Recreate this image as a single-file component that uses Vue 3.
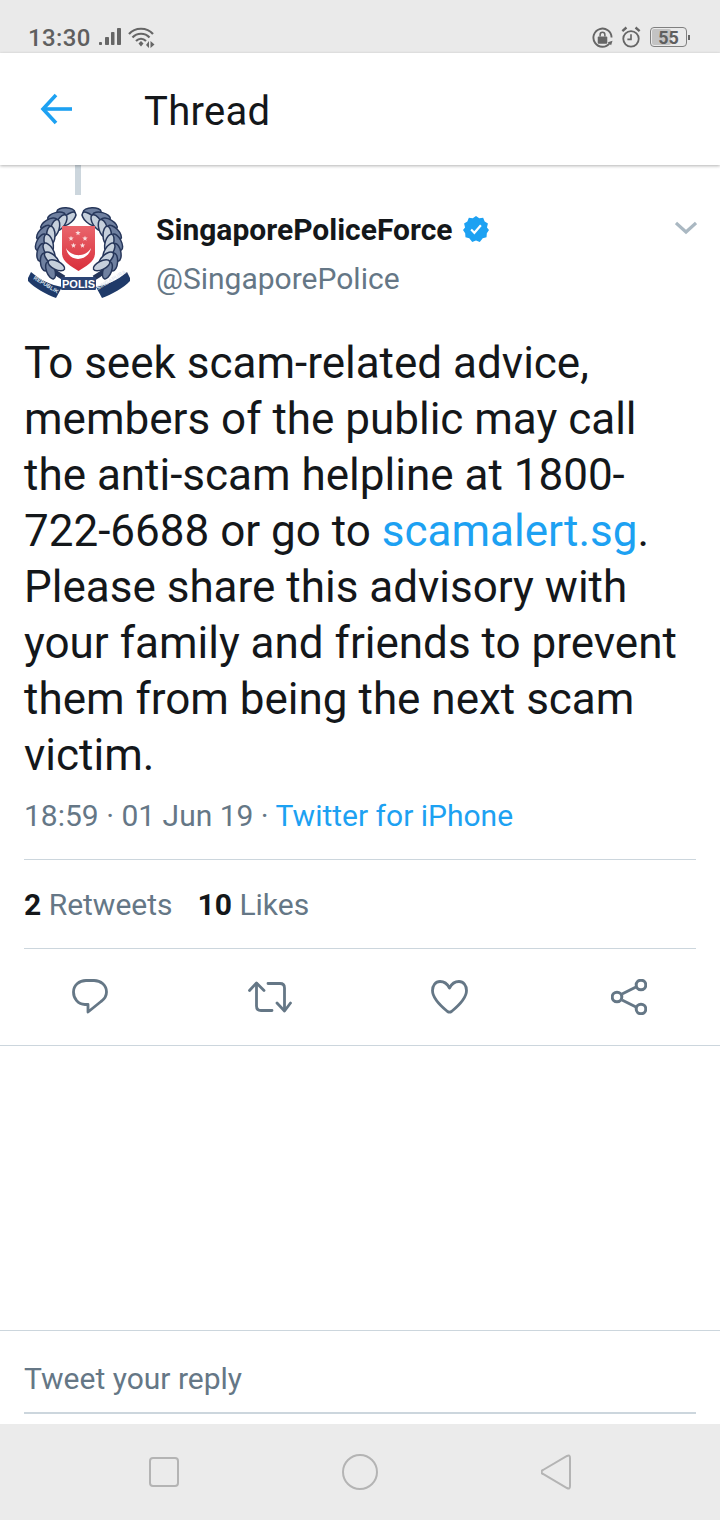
<template>
  <div class="phone">
    <div class="status">
      <div class="status-left">
        <span class="time">13:30</span>
        <svg class="signal" width="22" height="18" viewBox="0 0 22 18"><rect x="0" y="14" width="3" height="3" rx=".8"/><rect x="6" y="9" width="4" height="8" rx=".8"/><rect x="12" y="4" width="3.5" height="13" rx=".8"/><rect x="18" y="0" width="4" height="17" rx=".8"/></svg>
        <svg class="wifi" width="27" height="21" viewBox="0 0 27 21" fill="none" stroke="#666" stroke-width="2.200"><path d="M1 7C7 0 19 0 25 7"/><path d="M4.500 10.500C9 5.500 17 5.500 21.500 10.500"/><path d="M8 14C11 11 15 11 18 14"/><path d="M10.500 16.500l2.500-2.500 2.500 2.500-2.500 3z" fill="#666" stroke="none"/><path d="M18 18l3-4v7zM22.500 14l4 3.500-4 3.500z" fill="#666" stroke="none"/></svg>
      </div>
      <div class="status-right">
        <svg width="21" height="21" viewBox="0 0 22 22" fill="none" stroke="#666" stroke-width="2"><path d="M18.500 17A9.500 9.500 0 1 1 20.500 11"/><path d="M21.500 14.500l-5 1.500 3.500 3z" fill="#666" stroke="none"/><rect x="6" y="10" width="10" height="7.500" rx="1" fill="#666" stroke="none"/><path d="M8.500 10V8a2.500 2.500 0 0 1 5 0v2" stroke-width="1.600"/></svg>
        <svg width="20" height="23" viewBox="0 0 22 25" fill="none" stroke="#666" stroke-width="2"><circle cx="11" cy="14" r="8.500"/><path d="M11 9v5.500H7" stroke-width="1.800"/><path d="M1.500 5.500L6 1.500M20.500 5.500L16 1.500" stroke-width="2.600"/></svg>
        <div class="battery-group">
          <div class="battery"><div class="battery-fill"></div><span>55</span></div>
          <div class="battery-tip"></div>
        </div>
      </div>
    </div>

    <header class="bar">
      <svg class="back" width="32" height="32" viewBox="0 0 32 32" fill="none" stroke="#1da1f2" stroke-width="3.600"><path d="M32 16H4"/><path d="M16 2L3 16l13 14"/></svg>
      <h1>Thread</h1>
    </header>

    <main class="content">
      <div class="stem"></div>
      <div class="author">
        <svg class="crest" width="102" height="95" viewBox="28 205 102 95">
          <defs>
            <linearGradient id="shield" x1="0" y1="0" x2="0" y2="1">
              <stop offset="0" stop-color="#e9656c"/>
              <stop offset="1" stop-color="#d92f3b"/>
            </linearGradient>
          </defs>
          <g v-for="side in sides" :key="side" :transform="side">
            <path d="M66 213C46 219 36 236 41 254c3 10 11 17 23 24" fill="none" stroke="#26365a" stroke-width="5"/>
            <ellipse v-for="(leaf, i) in leaves" :key="i" :cx="leaf.x" :cy="leaf.y" rx="9" ry="4.200" :transform="leaf.t" :fill="leaf.fill" stroke="#26365a" stroke-width="1.500"/>
            <path d="M31 272c9 8 20 13 31 15l-6 11c-11-4-22-10-29-18z" fill="#1f3a69"/>
          </g>
          <text class="tiny" transform="translate(33 279) rotate(31)">REPUBLIK</text>
          <text class="tiny" transform="translate(98 290) rotate(-31)">SINGAPURA</text>
          <path d="M62 226h33v27c0 9-9 13-16.500 18C71 266 62 262 62 253z" fill="url(#shield)"/>
          <path d="M66 248c5 9 19 10 25 0-2 13-22 16-25 0z" fill="#fff"/>
          <polygon v-for="(s, i) in stars" :key="i" :points="s" fill="#f9dcdc"/>
          <rect x="61" y="277" width="35" height="13" rx="1" fill="#2c4474"/>
          <text x="78.500" y="287.500" text-anchor="middle" class="polis">POLIS</text>
        </svg>
        <div class="names">
          <div class="name-row">
            <span class="name">SingaporePoliceForce</span>
            <svg class="verified" width="26" height="26" viewBox="0 0 24 24"><path d="M12 0l3 2 3.600-.3 1.400 3.300 3 2-.9 3.500L24 13l-2 3-.3 3.600-3.500.9L15.500 24 12 22.600 8.500 24l-2.700-3.500-3.500-.9L2 16l-2-3 1.900-2.500L1 7l3-2L5.400 1.700 9 2z" fill="#1da1f2"/><path d="M7.500 12.500l3 3 6-7" fill="none" stroke="#fff" stroke-width="2"/></svg>
          </div>
          <div class="handle">@SingaporePolice</div>
        </div>
        <svg class="caret" width="22" height="14" viewBox="0 0 22 14" fill="none" stroke="#aab8c2" stroke-width="3.200"><path d="M1 2l10 9 10-9"/></svg>
      </div>

      <p class="tweet">To seek scam-related advice, members of the public may call the anti-scam helpline at 1800-722-6688 or go to <span class="link">scamalert.sg</span>. Please share this advisory with your family and friends to prevent them from being the next scam victim.</p>

      <div class="meta">18:59 · 01 Jun 19 · <span class="link">Twitter for iPhone</span></div>

      <div class="stats">
        <span><b>2</b> Retweets</span>
        <span><b>10</b> Likes</span>
      </div>

      <div class="actions">
        <svg width="36" height="36" viewBox="0 0 36 36" fill="none" stroke="#657786" stroke-width="2.800" stroke-linejoin="round"><path d="M14 1.500h8c7 0 12.500 5 12.500 11.500 0 4-2 7-5.500 9.500L16 33v-7.500h-3C6 25.500 1.500 19.500 1.500 13 1.500 6.500 7 1.500 14 1.500z"/></svg>
        <svg width="44" height="32" viewBox="0 0 44 32" fill="none" stroke="#657786" stroke-width="2.800" stroke-linecap="round" stroke-linejoin="round"><path d="M1.500 9.500L8.500 2l7.500 7.500"/><path d="M8.500 3v22c0 3 1.500 4.500 4.500 4.500h11"/><path d="M20 2.500h12c3 0 4.500 1.500 4.500 4.500v22"/><path d="M29 22l7.500 8 6-8"/></svg>
        <svg class="nudge" width="37" height="34" viewBox="0 0 37 34" fill="none" stroke="#657786" stroke-width="2.800" stroke-linejoin="round"><path d="M18.500 8C16 3 12 1.500 9 1.500 4.500 1.500 1.500 5.500 1.500 10.500 1.500 18 11 27 16.500 31.500c1.500 1 2.500 1 4 0C26 27 35.500 18 35.500 10.500 35.500 5.500 32.500 1.500 28 1.500 25 1.500 21 3 18.500 8z"/></svg>
        <svg class="nudge" width="36" height="36" viewBox="0 0 36 36" fill="none" stroke="#657786" stroke-width="3"><circle cx="6" cy="18" r="4.800"/><circle cx="30" cy="6" r="4.800"/><circle cx="30" cy="30" r="4.800"/><path d="M11 15l14-7M11 21l14 7"/></svg>
      </div>
    </main>

    <div class="spacer"></div>

    <footer class="reply">
      <div class="reply-text">Tweet your reply</div>
    </footer>

    <nav class="nav">
      <svg width="30" height="30" viewBox="0 0 30 30" fill="none" stroke="#b4b4b4" stroke-width="2"><rect x="1" y="1" width="28" height="28" rx="3"/></svg>
      <svg width="36" height="36" viewBox="0 0 36 36" fill="none" stroke="#b4b4b4" stroke-width="2"><circle cx="18" cy="18" r="17"/></svg>
      <svg width="30" height="36" viewBox="0 0 30 36" fill="none" stroke="#b4b4b4" stroke-width="2"><path d="M2 16L26 2c2-1 3-.5 3 2v28c0 2.500-1 3-3 2L2 20c-2-1-2-3 0-4z"/></svg>
    </nav>
  </div>
</template>

<script setup>
const sides = ['translate(0 0)', 'translate(158 0) scale(-1 1)']

const leaves = []
for (let i = 0; i < 8; i++) {
  const deg = 250 - i * 16
  const a = (deg * Math.PI) / 180
  for (const [r, tilt] of [[0.98, 22], [0.78, -22]]) {
    const x = 79 + 39 * r * Math.cos(a)
    const y = 246 + 37 * r * Math.sin(a)
    leaves.push({
      x: x.toFixed(1),
      y: y.toFixed(1),
      t: `rotate(${(deg + 90 + tilt).toFixed(0)} ${x.toFixed(1)} ${y.toFixed(1)})`,
      fill: r > 0.9 ? '#6f80a0' : '#c6d0dc',
    })
  }
}

function star(cx, cy, r) {
  const pts = []
  for (let i = 0; i < 10; i++) {
    const rad = i % 2 ? r * 0.42 : r
    const a = (-90 + i * 36) * (Math.PI / 180)
    pts.push(`${(cx + rad * Math.cos(a)).toFixed(1)},${(cy + rad * Math.sin(a)).toFixed(1)}`)
  }
  return pts.join(' ')
}
const stars = [
  star(78, 233, 2.8),
  star(71, 238.500, 2.8),
  star(85, 238.500, 2.8),
  star(73.500, 245.500, 2.8),
  star(82.500, 245.500, 2.8),
]
</script>

<style>
html, body { margin: 0; background: #fff; }
</style>

<style scoped>
.phone {
  width: 720px;
  height: 1520px;
  display: flex;
  flex-direction: column;
  background: #fff;
  font-family: Roboto, "Liberation Sans", sans-serif;
  color: #14171a;
  overflow: hidden;
}
.status {
  height: 53px;
  flex: none;
  background: #eaeaea;
  display: flex;
  justify-content: space-between;
  align-items: flex-end;
  padding: 0 30px 0 28px;
  box-sizing: border-box;
}
.status-left { display: flex; align-items: center; gap: 7px; height: 30px; margin-bottom: 1px; }
.time { font-size: 24px; font-weight: 500; color: #5f5f5f; line-height: 30px; letter-spacing: .4px; padding-top: 2px; margin-right: 1px; }
.signal { fill: #666; }
.status-right { display: flex; align-items: center; gap: 8px; height: 30px; margin-bottom: 1px; }
.battery-group { display: flex; align-items: center; gap: 1px; margin-left: 1px; }
.battery {
  position: relative;
  width: 37px;
  height: 20px;
  box-sizing: border-box;
  border: 1.500px solid #808080;
  border-radius: 4px;
  display: flex;
  align-items: center;
  justify-content: center;
  font-size: 18px;
  font-weight: 700;
  color: #5f5f5f;
}
.battery span { position: relative; }
.battery-fill { position: absolute; left: 1px; top: 1px; bottom: 1px; width: 19px; background: #c3c3c3; border-radius: 2px; }
.battery-tip { width: 2px; height: 5px; background: #666; }
.bar {
  height: 112px;
  flex: none;
  display: flex;
  align-items: center;
  box-shadow: 0 1px 3px rgba(0,0,0,.3);
  position: relative;
  z-index: 1;
  padding-left: 40px;
  box-sizing: border-box;
}
.back { flex: none; }
.bar h1 { margin: 5px 0 0 72px; font-size: 40px; font-weight: 400; line-height: 50px; color: #14171a; letter-spacing: .3px; }
.content { flex: none; padding: 0 24px; border-bottom: 1px solid #ccd6dd; box-sizing: border-box; }
.stem { width: 6px; height: 30px; background: #ccd6dd; margin-left: 51px; }
.author { display: flex; align-items: flex-start; height: 110px; margin-top: 12px; }
.crest { flex: none; margin: -2px 0 0 4px; }
.polis { font: 700 11px "Liberation Sans", sans-serif; fill: #fff; }
.tiny { font: 700 5.500px "Liberation Sans", sans-serif; fill: #dfe6f0; }
.names { margin-left: 26px; flex: 1; }
.name-row { display: flex; align-items: center; gap: 10px; height: 44px; }
.name { font-size: 30px; font-weight: 700; color: #14171a; }
.handle { font-size: 30px; color: #657786; line-height: 50px; margin-top: 3px; }
.caret { flex: none; margin-top: 14px; margin-right: -1px; }
.tweet { margin: 18px 0 0; font-size: 44px; line-height: 56px; color: #14171a; }
.link { color: #1da1f2; }
.meta { font-size: 30px; line-height: 40px; color: #657786; margin-top: 13px; padding-bottom: 23px; border-bottom: 1px solid #ccd6dd; }
.stats { display: flex; gap: 25px; height: 88px; align-items: center; border-bottom: 1px solid #ccd6dd; font-size: 30px; color: #657786; }
.stats b { color: #14171a; font-weight: 700; }
.actions { display: grid; grid-template-columns: repeat(4, 180px); justify-items: center; align-items: center; height: 96px; margin: 0 -24px; }
.nudge { margin-right: 2px; }
.spacer { flex: 1; }
.reply { flex: none; height: 94px; border-top: 1px solid #ccd6dd; padding: 0 24px; box-sizing: border-box; }
.reply-text { height: 81px; line-height: 96px; font-size: 30px; color: #657786; border-bottom: 2px solid #ccd6dd; }
.nav { flex: none; height: 96px; background: #ebebeb; display: flex; align-items: center; justify-content: space-between; padding: 0 149px; box-sizing: border-box; }
</style>
